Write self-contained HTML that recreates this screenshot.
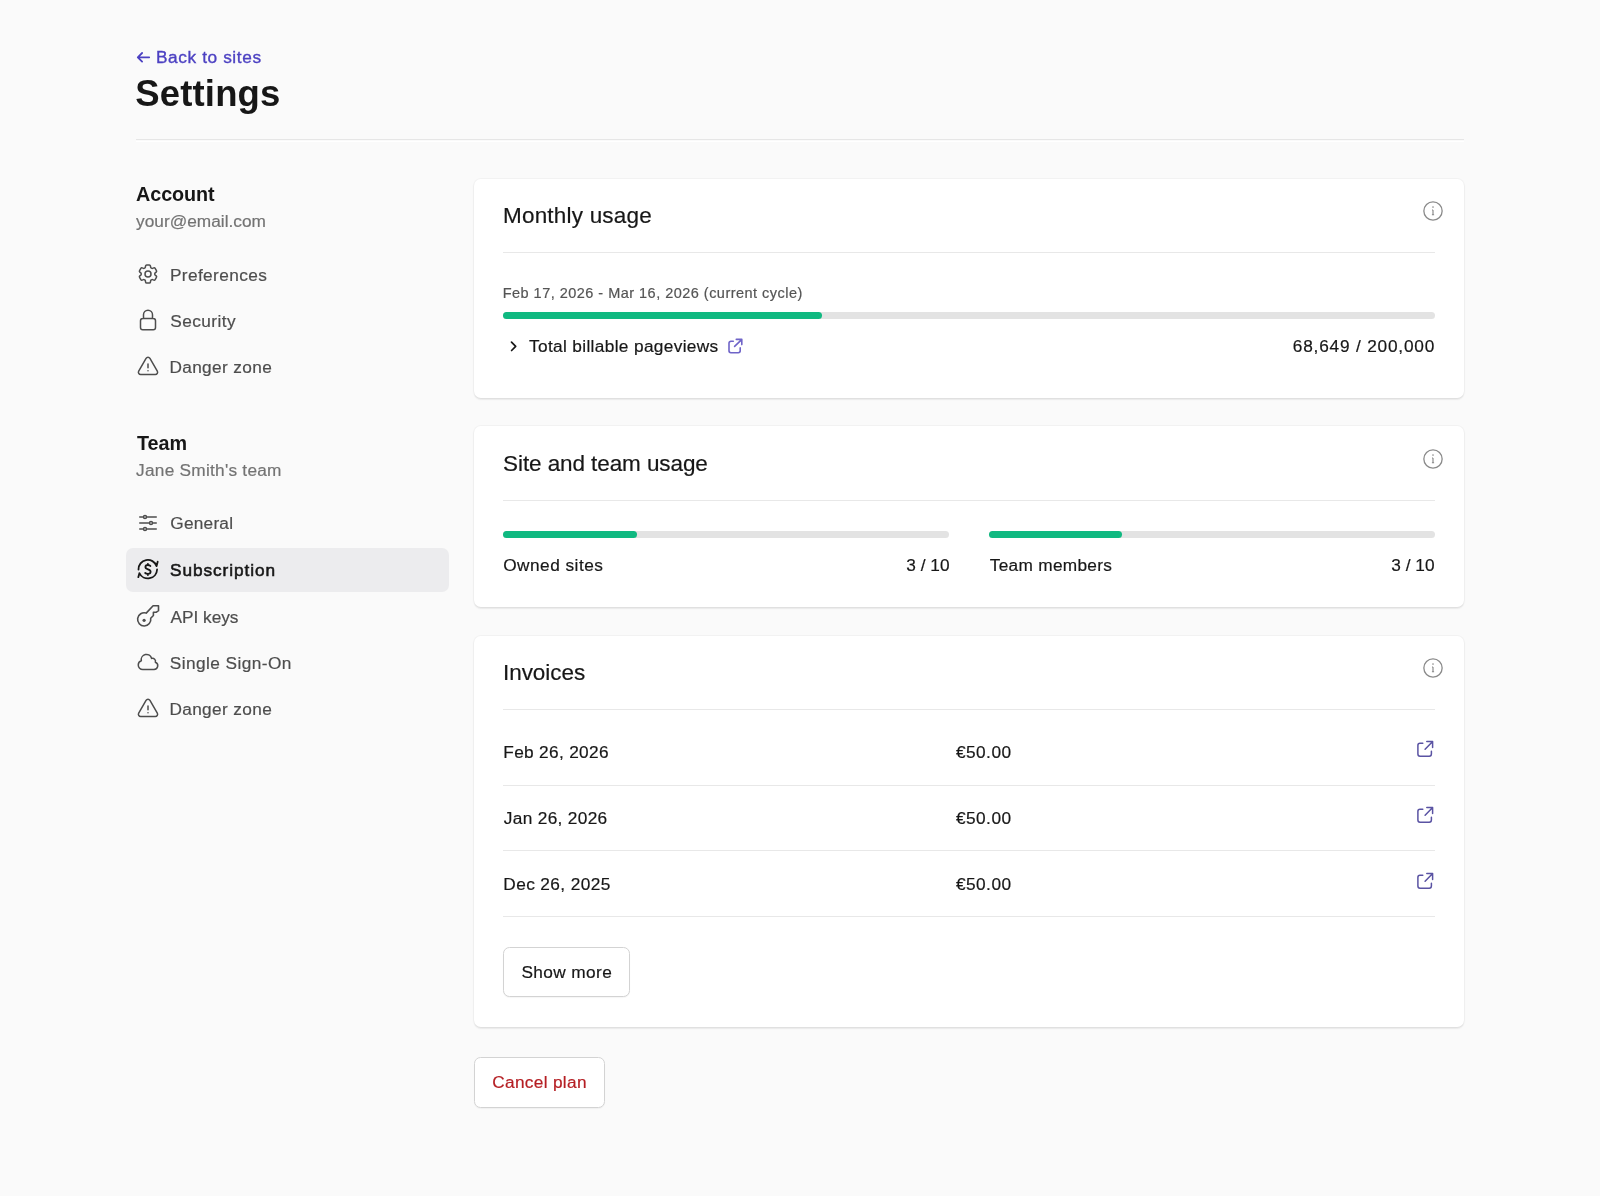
<!DOCTYPE html>
<html><head><meta charset="utf-8"><title>Settings</title><style>
html,body{margin:0;padding:0}
body{width:1600px;height:1196px;background:#fafafa;position:relative;overflow:hidden;font-family:"Liberation Sans",sans-serif}
#page{position:absolute;left:0;top:0;width:1600px;height:1196px;will-change:transform}
.t{position:absolute;white-space:nowrap}
.ic{position:absolute;overflow:visible}
.hl{position:absolute}
.card{position:absolute;left:473.5px;width:990.5px;background:#fff;border-radius:7px;box-shadow:0 1.5px 1.5px rgba(0,0,0,0.06),0 1px 3px rgba(0,0,0,0.04),0 0 0 1px rgba(0,0,0,0.03)}
.track{position:absolute;background:#e3e3e3;border-radius:4px}
.fill{position:absolute;background:#10b981;border-radius:4px}
.btn{position:absolute;box-sizing:border-box;border:1.5px solid #d3d3d3;border-radius:6.5px;background:#fff;box-shadow:0 1px 1px rgba(0,0,0,0.04)}
.sel{position:absolute;left:125.5px;top:548px;width:323px;height:43.5px;background:#ececee;border-radius:7px}
</style></head><body><div id="page">
<svg class="ic" style="left:134px;top:45px;width:20px;height:24px" viewBox="0 0 20 24" fill="none" stroke="#4c41c2" stroke-width="1.8" stroke-linecap="round" stroke-linejoin="round"><path d="M15.2 12.3H3.9M8.1 8L3.8 12.3L8.1 16.6"/></svg>
<div class="t" id="back" style="left:156.00px;top:49.17px;font-size:17.25px;line-height:17.25px;color:#4c41c2;letter-spacing:0.602px;-webkit-text-stroke-width:0.35px;">Back to sites</div>
<div class="t b" id="settings" style="left:135.20px;top:75.97px;font-size:36.5px;line-height:36.5px;color:#171717;font-weight:700;letter-spacing:0.172px;-webkit-text-stroke-width:0px;">Settings</div>
<div class="hl" style="left:136px;top:139.2px;width:1328px;height:1.2px;background:#e6e6e6"></div>
<div class="hl" style="left:136px;top:141px;width:1328px;height:1px;background:#ffffff"></div>
<div class="t b" id="account" style="left:136.10px;top:185.30px;font-size:19.75px;line-height:19.75px;color:#171717;font-weight:700;letter-spacing:-0.067px;-webkit-text-stroke-width:0px;">Account</div>
<div class="t" id="email" style="left:136.10px;top:212.62px;font-size:17.25px;line-height:17.25px;color:#737373;letter-spacing:0.016px;-webkit-text-stroke-width:0.2px;">your@email.com</div>
<svg class="ic" style="left:135.75px;top:262.2px;width:24px;height:24px;" viewBox="0 0 24 24" fill="none" stroke="#4d4d4d" stroke-width="1.5" stroke-linecap="round" stroke-linejoin="round"><path d="M9.594 3.94c.09-.542.56-.94 1.11-.94h2.593c.55 0 1.02.398 1.11.94l.213 1.281c.063.374.313.686.645.87.074.04.147.083.22.127.325.196.72.257 1.075.124l1.217-.456a1.125 1.125 0 0 1 1.37.49l1.296 2.247a1.125 1.125 0 0 1-.26 1.431l-1.003.827c-.293.241-.438.613-.43.992a7.723 7.723 0 0 1 0 .255c-.008.378.137.75.43.991l1.004.827c.424.35.534.955.26 1.43l-1.298 2.247a1.125 1.125 0 0 1-1.369.491l-1.217-.456c-.355-.133-.75-.072-1.076.124a6.47 6.47 0 0 1-.22.128c-.331.183-.581.495-.644.869l-.213 1.281c-.09.543-.56.94-1.11.94h-2.594c-.55 0-1.019-.398-1.11-.94l-.213-1.281c-.062-.374-.312-.686-.644-.87a6.52 6.52 0 0 1-.22-.127c-.325-.196-.72-.257-1.076-.124l-1.217.456a1.125 1.125 0 0 1-1.369-.49l-1.297-2.247a1.125 1.125 0 0 1 .26-1.431l1.004-.827c.292-.24.437-.613.43-.991a6.932 6.932 0 0 1 0-.255c.007-.38-.138-.751-.43-.992l-1.004-.827a1.125 1.125 0 0 1-.26-1.43l1.297-2.247a1.125 1.125 0 0 1 1.37-.491l1.216.456c.356.133.751.072 1.076-.124.072-.044.146-.086.22-.128.332-.183.582-.495.644-.869l.214-1.28Z"/><path d="M15 12a3 3 0 1 1-6 0 3 3 0 0 1 6 0Z"/></svg>
<div class="t" id="pref" style="left:169.90px;top:266.72px;font-size:17.25px;line-height:17.25px;color:#4d4d4d;letter-spacing:0.398px;-webkit-text-stroke-width:0.2px;">Preferences</div>
<svg class="ic" style="left:135.75px;top:308.4px;width:24px;height:24px;" viewBox="0 0 24 24" fill="none" stroke="#4d4d4d" stroke-width="1.5" stroke-linecap="round" stroke-linejoin="round"><path d="M16.5 10.5V6.75a4.5 4.5 0 1 0-9 0v3.75m-.75 11.25h10.5a2.25 2.25 0 0 0 2.25-2.25v-6.75a2.25 2.25 0 0 0-2.25-2.25H6.75a2.25 2.25 0 0 0-2.25 2.25v6.75a2.25 2.25 0 0 0 2.25 2.25Z"/></svg>
<div class="t" id="sec" style="left:170.20px;top:312.74px;font-size:17.25px;line-height:17.25px;color:#4d4d4d;letter-spacing:0.457px;-webkit-text-stroke-width:0.2px;">Security</div>
<svg class="ic" style="left:135.75px;top:354.7px;width:24px;height:24px;" viewBox="0 0 24 24" fill="none" stroke="#4d4d4d" stroke-width="1.5" stroke-linecap="round" stroke-linejoin="round"><path d="M12 9v3.75m-9.303 3.376c-.866 1.5.217 3.374 1.948 3.374h14.71c1.73 0 2.813-1.874 1.948-3.374L13.949 3.378c-.866-1.5-3.032-1.5-3.898 0L2.697 16.126ZM12 15.75h.007v.008H12v-.008Z"/></svg>
<div class="t" id="danger1" style="left:169.40px;top:359.02px;font-size:17.25px;line-height:17.25px;color:#4d4d4d;letter-spacing:0.360px;-webkit-text-stroke-width:0.2px;">Danger zone</div>
<div class="t b" id="team" style="left:137.00px;top:434.05px;font-size:19.75px;line-height:19.75px;color:#171717;font-weight:700;letter-spacing:-0.001px;-webkit-text-stroke-width:0px;">Team</div>
<div class="t" id="jane" style="left:136.10px;top:462.07px;font-size:17.25px;line-height:17.25px;color:#737373;letter-spacing:0.250px;-webkit-text-stroke-width:0.2px;">Jane Smith&#39;s team</div>
<div class="sel"></div>
<svg class="ic" style="left:135.75px;top:510.99999999999994px;width:24px;height:24px;" viewBox="0 0 24 24" fill="none" stroke="#4d4d4d" stroke-width="1.5" stroke-linecap="round" stroke-linejoin="round"><path d="M10.5 6h9.75M10.5 6a1.5 1.5 0 1 1-3 0m3 0a1.5 1.5 0 1 0-3 0M3.75 6H7.5m3 12h9.75m-9.75 0a1.5 1.5 0 0 1-3 0m3 0a1.5 1.5 0 0 0-3 0m-3.75 0H7.5m9-6h3.75m-3.75 0a1.5 1.5 0 0 1-3 0m3 0a1.5 1.5 0 0 0-3 0m-9.75 0h9.75"/></svg>
<div class="t" id="general" style="left:170.25px;top:515.27px;font-size:17.25px;line-height:17.25px;color:#4d4d4d;letter-spacing:0.236px;-webkit-text-stroke-width:0.2px;">General</div>
<svg class="ic" style="left:132px;top:554px;width:32px;height:32px" viewBox="0 0 32 32" fill="none" stroke="#171717" stroke-width="1.8" stroke-linecap="round" stroke-linejoin="round"><path d="M6.51 15.48A9.3 9.3 0 0 1 24.58 12.08L25.68 7.7"/><path d="M25.09 15.48A9.3 9.3 0 0 1 7.41 19.15L6.3 23.15"/><path d="M18.4 12.1C17.9 11.3 17.0 11.0 15.9 11.0C14.4 11.0 13.4 11.8 13.4 13.1C13.4 16.1 18.6 14.8 18.6 17.8C18.6 19.1 17.4 19.9 15.9 19.9C14.7 19.9 13.8 19.6 13.2 19.0M15.9 9.8V11.0M15.9 19.9V21.1"/></svg>
<div class="t" id="subs" style="left:170.10px;top:561.62px;font-size:17.25px;line-height:17.25px;color:#171717;letter-spacing:0.909px;-webkit-text-stroke-width:0.55px;">Subscription</div>
<svg class="ic" style="left:132px;top:600px;width:32px;height:32px;" viewBox="0 0 32 32" fill="none" stroke="#4d4d4d" stroke-width="1.6" stroke-linecap="round" stroke-linejoin="round"><path d="M14.2 13.1L21.1 5.7H26.5V10.7L24.1 12.3H21.4V15.5L18.7 18.2A6.6 6.6 0 1 1 14.2 13.1Z"/><circle cx="12.1" cy="20.3" r="1.6" fill="#4d4d4d" stroke="none"/></svg>
<div class="t" id="api" style="left:170.60px;top:608.72px;font-size:17.25px;line-height:17.25px;color:#4d4d4d;letter-spacing:-0.028px;-webkit-text-stroke-width:0.2px;">API keys</div>
<svg class="ic" style="left:135.5px;top:649.6px;width:24px;height:24px;" viewBox="0 0 24 24" fill="none" stroke="#4d4d4d" stroke-width="1.5" stroke-linecap="round" stroke-linejoin="round"><path d="M2.25 15a4.5 4.5 0 0 0 4.5 4.5H18a3.75 3.75 0 0 0 1.332-7.257 3 3 0 0 0-3.758-3.848 5.25 5.25 0 0 0-10.233 2.33A4.502 4.502 0 0 0 2.25 15Z"/></svg>
<div class="t" id="sso" style="left:169.80px;top:655.12px;font-size:17.25px;line-height:17.25px;color:#4d4d4d;letter-spacing:0.430px;-webkit-text-stroke-width:0.2px;">Single Sign-On</div>
<svg class="ic" style="left:135.75px;top:697.4000000000001px;width:24px;height:24px;" viewBox="0 0 24 24" fill="none" stroke="#4d4d4d" stroke-width="1.5" stroke-linecap="round" stroke-linejoin="round"><path d="M12 9v3.75m-9.303 3.376c-.866 1.5.217 3.374 1.948 3.374h14.71c1.73 0 2.813-1.874 1.948-3.374L13.949 3.378c-.866-1.5-3.032-1.5-3.898 0L2.697 16.126ZM12 15.75h.007v.008H12v-.008Z"/></svg>
<div class="t" id="danger2" style="left:169.40px;top:700.92px;font-size:17.25px;line-height:17.25px;color:#4d4d4d;letter-spacing:0.360px;-webkit-text-stroke-width:0.2px;">Danger zone</div>
<div class="card" style="top:179px;height:219px"></div>
<div class="card" style="top:426px;height:181px"></div>
<div class="card" style="top:636px;height:391px"></div>
<div class="t" id="monthly" style="left:503.00px;top:205.41px;font-size:22.5px;line-height:22.5px;color:#171717;letter-spacing:0.199px;-webkit-text-stroke-width:0.2px;">Monthly usage</div>
<svg class="ic" style="left:1420.60px;top:199.40px;width:24px;height:24px" viewBox="0 0 24 24" fill="none" stroke="#8a8a8a" stroke-width="1.3"><circle cx="12" cy="12" r="9.15"/><path d="M12.0 10.9V15.6M11.0 11.0H12.0M10.9 15.75H13.1" stroke-width="1.15"/><circle cx="12" cy="8.1" r="0.8" fill="#8a8a8a" stroke="none"/></svg>
<div class="hl" style="left:503px;top:252px;width:932px;height:1px;background:#e8e8e8"></div>
<div class="t" id="date" style="left:502.70px;top:286.42px;font-size:14.5px;line-height:14.5px;color:#555555;letter-spacing:0.476px;-webkit-text-stroke-width:0.2px;">Feb 17, 2026 - Mar 16, 2026 (current cycle)</div>
<div class="track" style="left:503px;top:312.0px;width:932px;height:7px"></div><div class="fill" style="left:503px;top:312.0px;width:319.20000000000005px;height:7px"></div>
<svg class="ic" style="left:504px;top:338px;width:18px;height:18px" viewBox="0 0 18 18" fill="none" stroke="#171717" stroke-width="1.7" stroke-linecap="round" stroke-linejoin="round"><path d="M7.5 4.1L11.7 8.4L7.6 12.5"/></svg>
<div class="t" id="total" style="left:529.00px;top:338.47px;font-size:17.25px;line-height:17.25px;color:#171717;letter-spacing:0.348px;-webkit-text-stroke-width:0.2px;">Total billable pageviews</div>
<svg class="ic" style="left:718px;top:332px;width:24px;height:24px" viewBox="0 0 24 24" fill="none" stroke="#6f64c8" stroke-width="1.6" stroke-linecap="round" stroke-linejoin="round"><path d="M15.3 9.3H12.9A1.9 1.9 0 0 0 11 11.2V18.8A1.9 1.9 0 0 0 12.9 20.7H20.3A1.9 1.9 0 0 0 22.2 18.8V15.9M16.6 14.4L23.1 8.1M18.3 7.4H23.8V12.6"/></svg>
<div class="t" id="num" style="right:164.90px;top:338.47px;font-size:17.25px;line-height:17.25px;color:#171717;letter-spacing:0.800px;-webkit-text-stroke-width:0.2px;">68,649 / 200,000</div>
<div class="t" id="site" style="left:503.10px;top:453.11px;font-size:22.5px;line-height:22.5px;color:#171717;letter-spacing:-0.089px;-webkit-text-stroke-width:0.2px;">Site and team usage</div>
<svg class="ic" style="left:1420.60px;top:447.20px;width:24px;height:24px" viewBox="0 0 24 24" fill="none" stroke="#8a8a8a" stroke-width="1.3"><circle cx="12" cy="12" r="9.15"/><path d="M12.0 10.9V15.6M11.0 11.0H12.0M10.9 15.75H13.1" stroke-width="1.15"/><circle cx="12" cy="8.1" r="0.8" fill="#8a8a8a" stroke="none"/></svg>
<div class="hl" style="left:503px;top:500px;width:932px;height:1px;background:#e8e8e8"></div>
<div class="track" style="left:503px;top:530.7px;width:446px;height:7px"></div><div class="fill" style="left:503px;top:530.7px;width:133.60000000000002px;height:7px"></div>
<div class="track" style="left:989px;top:530.7px;width:446px;height:7px"></div><div class="fill" style="left:989px;top:530.7px;width:133.20000000000005px;height:7px"></div>
<div class="t" id="owned" style="left:503.20px;top:557.07px;font-size:17.25px;line-height:17.25px;color:#171717;letter-spacing:0.480px;-webkit-text-stroke-width:0.2px;">Owned sites</div>
<div class="t" id="s310a" style="right:650.50px;top:557.27px;font-size:17.25px;line-height:17.25px;color:#171717;-webkit-text-stroke-width:0.2px;">3 / 10</div>
<div class="t" id="teamm" style="left:989.80px;top:557.07px;font-size:17.25px;line-height:17.25px;color:#171717;letter-spacing:0.290px;-webkit-text-stroke-width:0.2px;">Team members</div>
<div class="t" id="s310b" style="right:165.50px;top:556.87px;font-size:17.25px;line-height:17.25px;color:#171717;-webkit-text-stroke-width:0.2px;">3 / 10</div>
<div class="t" id="invoices" style="left:503.00px;top:661.81px;font-size:22.5px;line-height:22.5px;color:#171717;letter-spacing:-0.058px;-webkit-text-stroke-width:0.2px;">Invoices</div>
<svg class="ic" style="left:1420.60px;top:655.70px;width:24px;height:24px" viewBox="0 0 24 24" fill="none" stroke="#8a8a8a" stroke-width="1.3"><circle cx="12" cy="12" r="9.15"/><path d="M12.0 10.9V15.6M11.0 11.0H12.0M10.9 15.75H13.1" stroke-width="1.15"/><circle cx="12" cy="8.1" r="0.8" fill="#8a8a8a" stroke="none"/></svg>
<div class="hl" style="left:503px;top:709px;width:932px;height:1px;background:#e8e8e8"></div>
<div class="t" id="feb" style="left:503.30px;top:744.32px;font-size:17.25px;line-height:17.25px;color:#171717;letter-spacing:0.327px;-webkit-text-stroke-width:0.2px;">Feb 26, 2026</div>
<div class="t" id="eur1" style="left:955.90px;top:743.87px;font-size:17.25px;line-height:17.25px;color:#171717;letter-spacing:0.480px;-webkit-text-stroke-width:0.2px;">€50.00</div>
<svg class="ic" style="left:1410px;top:734.1999999999999px;width:24.0px;height:24.0px" viewBox="0 0 24 24" fill="none" stroke="#5a53a3" stroke-width="1.50" stroke-linecap="round" stroke-linejoin="round"><path d="M12.8 9.3H10A2.1 2.1 0 0 0 7.9 11.4V20.1A2.1 2.1 0 0 0 10 22.2H19.3A2.1 2.1 0 0 0 21.4 20.1V17.3M15.1 15.2L22.4 7.7M16.8 7.5H22.6V13.5"/></svg>
<div class="t" id="jan" style="left:503.80px;top:810.32px;font-size:17.25px;line-height:17.25px;color:#171717;letter-spacing:0.328px;-webkit-text-stroke-width:0.2px;">Jan 26, 2026</div>
<div class="t" id="eur2" style="left:955.90px;top:810.07px;font-size:17.25px;line-height:17.25px;color:#171717;letter-spacing:0.480px;-webkit-text-stroke-width:0.2px;">€50.00</div>
<svg class="ic" style="left:1410px;top:800.0999999999999px;width:24.0px;height:24.0px" viewBox="0 0 24 24" fill="none" stroke="#5a53a3" stroke-width="1.50" stroke-linecap="round" stroke-linejoin="round"><path d="M12.8 9.3H10A2.1 2.1 0 0 0 7.9 11.4V20.1A2.1 2.1 0 0 0 10 22.2H19.3A2.1 2.1 0 0 0 21.4 20.1V17.3M15.1 15.2L22.4 7.7M16.8 7.5H22.6V13.5"/></svg>
<div class="t" id="dec" style="left:503.30px;top:876.17px;font-size:17.25px;line-height:17.25px;color:#171717;letter-spacing:0.400px;-webkit-text-stroke-width:0.2px;">Dec 26, 2025</div>
<div class="t" id="eur3" style="left:955.90px;top:875.74px;font-size:17.25px;line-height:17.25px;color:#171717;letter-spacing:0.480px;-webkit-text-stroke-width:0.2px;">€50.00</div>
<svg class="ic" style="left:1410px;top:866.0px;width:24.0px;height:24.0px" viewBox="0 0 24 24" fill="none" stroke="#5a53a3" stroke-width="1.50" stroke-linecap="round" stroke-linejoin="round"><path d="M12.8 9.3H10A2.1 2.1 0 0 0 7.9 11.4V20.1A2.1 2.1 0 0 0 10 22.2H19.3A2.1 2.1 0 0 0 21.4 20.1V17.3M15.1 15.2L22.4 7.7M16.8 7.5H22.6V13.5"/></svg>
<div class="hl" style="left:503px;top:784.5px;width:932px;height:1px;background:#e8e8e8"></div>
<div class="hl" style="left:503px;top:850px;width:932px;height:1px;background:#e8e8e8"></div>
<div class="hl" style="left:503px;top:916px;width:932px;height:1px;background:#e8e8e8"></div>
<div class="btn" style="left:503px;top:947px;width:127px;height:50px"></div>
<div class="t" id="show" style="left:521.40px;top:964.47px;font-size:17.25px;line-height:17.25px;color:#171717;letter-spacing:0.400px;-webkit-text-stroke-width:0.2px;">Show more</div>
<div class="btn" style="left:474px;top:1057px;width:131px;height:50.5px"></div>
<div class="t" id="cancel" style="left:492.20px;top:1074.19px;font-size:17.25px;line-height:17.25px;color:#b51f24;letter-spacing:0.320px;-webkit-text-stroke-width:0.2px;">Cancel plan</div>
</div></body></html>
